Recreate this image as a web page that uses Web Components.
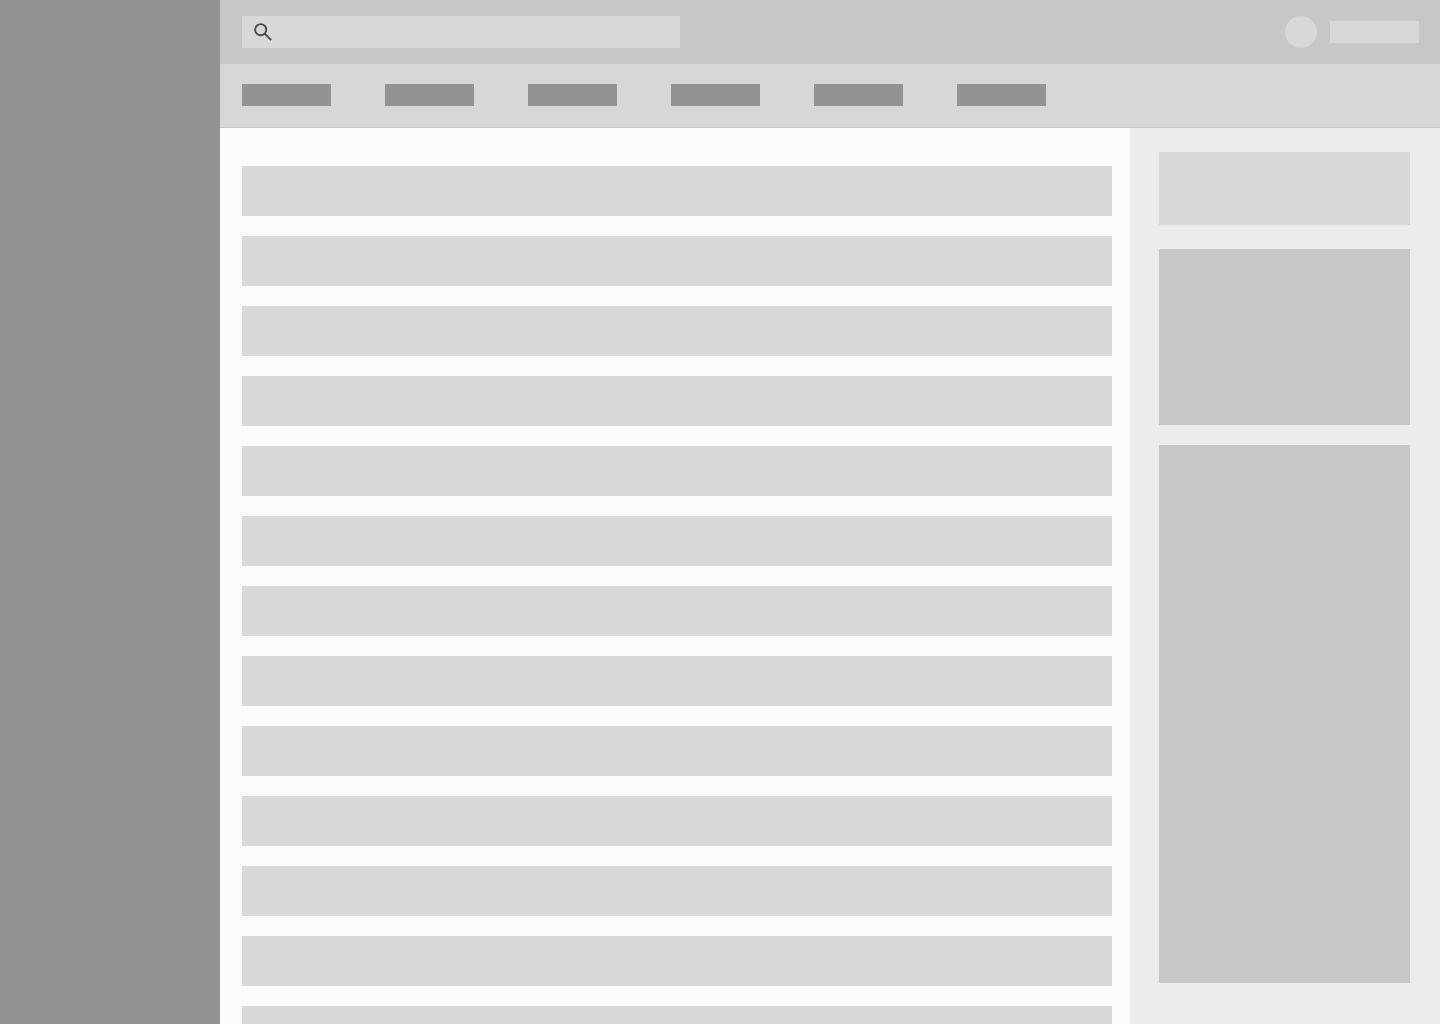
<!DOCTYPE html>
<html lang="en">
<head>
<meta charset="utf-8">
<meta name="viewport" content="width=device-width, initial-scale=1">
<title>Dashboard wireframe</title>
<style>
  body { margin: 0; font-family: "Liberation Sans", sans-serif; }
</style>
</head>
<body>
<wire-app>
  <wire-sidebar slot="nav"></wire-sidebar>
  <wire-header slot="top">
    <wire-search></wire-search>
    <wire-profile slot="end"></wire-profile>
  </wire-header>
  <wire-tabs slot="top" count="6"></wire-tabs>
  <wire-list slot="main" count="13"></wire-list>
  <wire-aside slot="aside">
    <wire-card class="summary"></wire-card>
    <wire-card class="medium"></wire-card>
    <wire-card class="tall"></wire-card>
  </wire-aside>
</wire-app>
<script>
class WireElement extends HTMLElement {
  connectedCallback() {
    if (!this.shadowRoot) {
      this.attachShadow({ mode: "open" }).innerHTML = this.render();
    }
  }
  repeat(make) {
    return Array.from({ length: Number(this.getAttribute("count")) }, (_, i) => make(i + 1)).join("");
  }
}

customElements.define("wire-app", class extends WireElement {
  render() {
    return `
      <style>
        :host {
          --dark: #939393; --mid: #c7c7c7; --light: #d8d8d8; --pale: #ececec; --paper: #fafafa;
          display: flex; height: 100vh; overflow: hidden; background: var(--paper);
        }
        .page { flex: 1; min-width: 0; display: flex; flex-direction: column; }
        .content { flex: 1; min-height: 0; display: flex; }
      </style>
      <slot name="nav"></slot>
      <div class="page">
        <slot name="top"></slot>
        <div class="content"><slot name="main"></slot><slot name="aside"></slot></div>
      </div>`;
  }
});

customElements.define("wire-sidebar", class extends WireElement {
  render() {
    return `<style>:host { display: block; flex: 0 0 220px; background: var(--dark); }</style>`;
  }
});

customElements.define("wire-header", class extends WireElement {
  render() {
    return `
      <style>
        :host { display: block; background: var(--mid); }
        header { display: flex; align-items: center; justify-content: space-between; gap: 24px; padding: 16px 21px 16px 22px; }
      </style>
      <header><slot></slot><slot name="end"></slot></header>`;
  }
});

customElements.define("wire-search", class extends WireElement {
  render() {
    return `
      <style>
        :host { display: block; flex: 0 1 438px; }
        label { display: flex; align-items: center; height: 32px; padding: 0 8px; gap: 8px; background: var(--light); }
        svg { flex: none; display: block; }
        input { flex: 1; min-width: 0; border: 0; padding: 0; background: transparent; outline: none; font: 14px/20px "Liberation Sans", sans-serif; color: #444; }
      </style>
      <label>
        <svg width="24" height="24" viewBox="0 0 24 24" fill="none" stroke="#4a4a4a" stroke-width="1.9" aria-hidden="true">
          <circle cx="10.7" cy="9.7" r="5.6"/>
          <path d="M14.7 13.7 L21.2 20.2"/>
        </svg>
        <input type="search" aria-label="Search">
      </label>`;
  }
});

customElements.define("wire-profile", class extends WireElement {
  render() {
    return `
      <style>
        :host { display: block; }
        button { display: flex; align-items: center; gap: 13px; border: 0; padding: 0; background: none; cursor: pointer; }
        .avatar { width: 32px; height: 32px; border-radius: 50%; background: var(--light); }
        .name { width: 89px; height: 22px; background: var(--light); }
      </style>
      <button type="button" aria-label="Account"><span class="avatar"></span><span class="name"></span></button>`;
  }
});

customElements.define("wire-tabs", class extends WireElement {
  render() {
    return `
      <style>
        :host { display: block; background: #d7d7d7; border-bottom: 1px solid var(--mid); }
        nav { display: flex; gap: 54px; padding: 20px 22px 21px; }
        a { flex: 0 1 89px; height: 22px; background: var(--dark); }
      </style>
      <nav>${this.repeat(i => `<a href="#section-${i}" aria-label="Section ${i}"></a>`)}</nav>`;
  }
});

customElements.define("wire-list", class extends WireElement {
  render() {
    return `
      <style>
        :host { display: block; flex: 1; min-width: 0; overflow-y: auto; scrollbar-width: none; }
        ul { display: flex; flex-direction: column; gap: 20px; list-style: none; margin: 0; padding: 38px 18px 20px 22px; }
        li { height: 50px; background: var(--light); }
      </style>
      <ul>${this.repeat(() => "<li></li>")}</ul>`;
  }
});

customElements.define("wire-aside", class extends WireElement {
  render() {
    return `
      <style>
        :host { display: block; box-sizing: border-box; flex: 0 0 310px; padding: 24px 30px 24px 29px; background: var(--pale); overflow-y: auto; scrollbar-width: none; }
        aside { display: flex; flex-direction: column; gap: 20px; }
      </style>
      <aside><slot></slot></aside>`;
  }
});

customElements.define("wire-card", class extends WireElement {
  render() {
    return `
      <style>
        :host { display: block; background: var(--mid); }
        :host(.summary) { height: 73px; margin-bottom: 4px; background: var(--light); }
        :host(.medium) { height: 176px; }
        :host(.tall) { height: 538px; }
      </style>`;
  }
});
</script>
</body>
</html>
